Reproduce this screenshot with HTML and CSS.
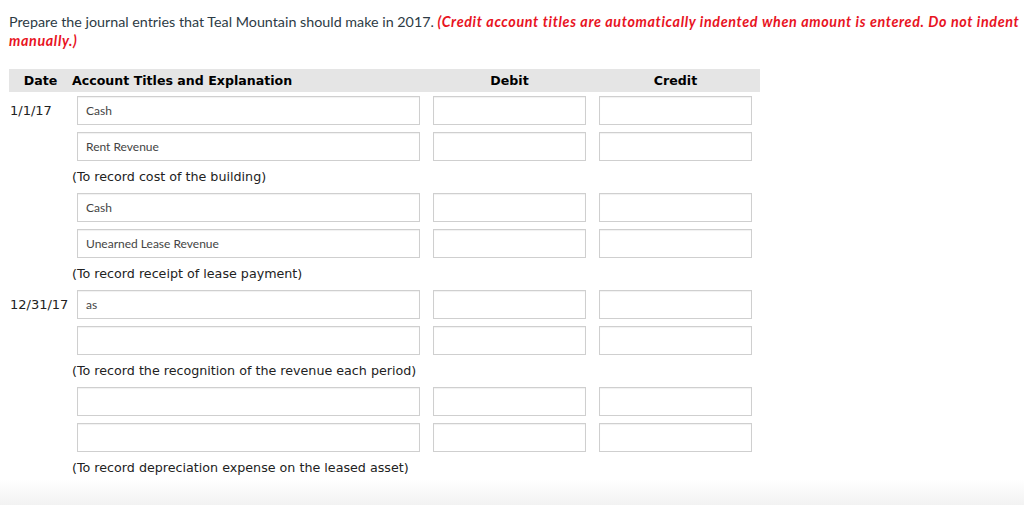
FILE: index.html
```html
<!DOCTYPE html>
<html>
<head>
<meta charset="utf-8">
<link rel="stylesheet" href="styles.css">
</head>
<body>
<div class="page">
  <p class="prompt">Prepare the journal entries that Teal Mountain should make in 2017. <em class="note">(Credit account titles are automatically indented when amount is entered. Do not indent manually.)</em></p>
  <table class="journal">
    <thead>
      <tr>
        <th class="c-date">Date</th>
        <th class="c-acct">Account Titles and Explanation</th>
        <th class="c-debit">Debit</th>
        <th class="c-credit">Credit</th>
      </tr>
    </thead>
    <tbody>
      <tr class="entry">
        <td class="date">1/1/17</td>
        <td class="acct"><div class="field">Cash</div></td>
        <td class="amt"><div class="field"></div></td>
        <td class="amt"><div class="field"></div></td>
      </tr>
      <tr class="entry">
        <td class="date"></td>
        <td class="acct"><div class="field">Rent Revenue</div></td>
        <td class="amt"><div class="field"></div></td>
        <td class="amt"><div class="field"></div></td>
      </tr>
      <tr class="expl">
        <td></td>
        <td colspan="3">(To record cost of the building)</td>
      </tr>
      <tr class="entry">
        <td class="date"></td>
        <td class="acct"><div class="field">Cash</div></td>
        <td class="amt"><div class="field"></div></td>
        <td class="amt"><div class="field"></div></td>
      </tr>
      <tr class="entry">
        <td class="date"></td>
        <td class="acct"><div class="field">Unearned Lease Revenue</div></td>
        <td class="amt"><div class="field"></div></td>
        <td class="amt"><div class="field"></div></td>
      </tr>
      <tr class="expl">
        <td></td>
        <td colspan="3">(To record receipt of lease payment)</td>
      </tr>
      <tr class="entry">
        <td class="date">12/31/17</td>
        <td class="acct"><div class="field">as</div></td>
        <td class="amt"><div class="field"></div></td>
        <td class="amt"><div class="field"></div></td>
      </tr>
      <tr class="entry">
        <td class="date"></td>
        <td class="acct"><div class="field"></div></td>
        <td class="amt"><div class="field"></div></td>
        <td class="amt"><div class="field"></div></td>
      </tr>
      <tr class="expl">
        <td></td>
        <td colspan="3">(To record the recognition of the revenue each period)</td>
      </tr>
      <tr class="entry">
        <td class="date"></td>
        <td class="acct"><div class="field"></div></td>
        <td class="amt"><div class="field"></div></td>
        <td class="amt"><div class="field"></div></td>
      </tr>
      <tr class="entry">
        <td class="date"></td>
        <td class="acct"><div class="field"></div></td>
        <td class="amt"><div class="field"></div></td>
        <td class="amt"><div class="field"></div></td>
      </tr>
      <tr class="expl">
        <td></td>
        <td colspan="3">(To record depreciation expense on the leased asset)</td>
      </tr>
    </tbody>
  </table>
  <div class="footer"></div>
</div>
</body>
</html>
```

FILE: styles.css
```css
html, body {
  margin: 0;
  padding: 0;
  background: #ffffff;
}
.page {
  width: 1024px;
  height: 505px;
  overflow: hidden;
  display: flex;
  flex-direction: column;
}
.prompt {
  margin: 0;
  padding: 12px 0 0 9px;
  font-family: Lato, "Open Sans", sans-serif;
  font-size: 14.3px;
  line-height: 19px;
  color: #2d3b45;
  height: 69px;
  flex: none;
  box-sizing: border-box;
}
.note {
  font-weight: bold;
  font-style: italic;
  color: #e8141f;
  letter-spacing: 0.63px;
}
.journal {
  margin-left: 9px;
  border-collapse: collapse;
  width: 751px;
  table-layout: fixed;
  font-family: "DejaVu Sans", Verdana, sans-serif;
  color: #222;
  flex: none;
}
.journal th {
  background: #e5e5e5;
  height: 23px;
  padding: 0;
  font-size: 12.6px;
  font-weight: bold;
  color: #000;
  text-align: center;
}
.journal th.c-date { width: 63px; }
.journal th.c-acct { width: 352px; text-align: left; }
.journal th.c-debit { width: 166px; padding: 0 4px 0 9px; box-sizing: border-box; }
.journal th.c-credit { width: 170px; padding: 0 8px 0 9px; box-sizing: border-box; }
.journal td {
  padding: 0;
}
.entry td {
  height: 36px;
  vertical-align: top;
}
.entry .date {
  font-size: 13px;
  padding: 11px 0 0 1px;
  box-sizing: border-box;
  color: #222;
}
.acct .field {
  margin: 4px 4px 3px 5px;
  padding-left: 8px;
  font-family: Lato, "Open Sans", sans-serif;
  font-size: 12px;
  color: #444;
  line-height: 27px;
}
.amt .field {
  margin: 4px 0 3px 9px;
  width: 153px;
}
.field {
  height: 29px;
  box-sizing: border-box;
  border: 1px solid #cfcfcf;
  box-shadow: inset 0 1px 1px rgba(0,0,0,0.06);
  background: #fff;
}
.expl td {
  height: 25px;
  font-size: 12.7px;
  color: #222;
  vertical-align: middle;
  line-height: 16px;
}
.footer {
  flex: 1;
  background: linear-gradient(#ffffff, #f2f2f2);
}
```
